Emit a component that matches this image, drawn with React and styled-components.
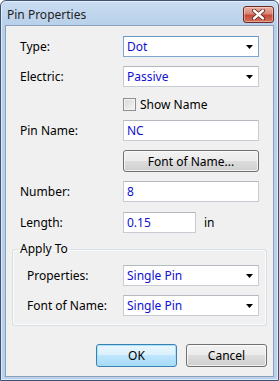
import styled, { createGlobalStyle } from 'styled-components';

const GlobalStyle = createGlobalStyle`
	html, body {
		margin: 0;
		padding: 0;
		background: #ffffff;
	}
	* {
		box-sizing: border-box;
	}
`;

const Window = styled.div`
	display: flex;
	flex-direction: column;
	width: 279px;
	height: 381px;
	padding: 0 4px 3px;
	border: 1px solid #3e5373;
	border-radius: 6px 6px 0 0;
	background: linear-gradient(#cadcf1, #b7cfea 26px, #b9d1ea);
	box-shadow: inset 0 0 0 1px rgba(255, 255, 255, 0.55);
	font-family: 'Noto Sans', 'Liberation Sans', sans-serif;
	font-size: 12px;
	color: #000;
`;

const TitleBar = styled.div`
	display: flex;
	align-items: center;
	justify-content: space-between;
	height: 24px;
	padding: 0 0 0 2px;
`;

const Title = styled.span`
	font-size: 12px;
	color: #1e1e1e;
	margin-top: 2px;
`;

const CloseButton = styled.button`
	display: flex;
	align-items: center;
	justify-content: center;
	width: 31px;
	height: 17px;
	margin: 3px 0 0;
	padding: 0;
	border: 1px solid #6f2a22;
	border-radius: 3px;
	background: linear-gradient(#eab0a4, #d98474 45%, #c54a38 55%, #d4735f);
	box-shadow: inset 0 0 0 1px rgba(255, 255, 255, 0.35);
`;

const Client = styled.div`
	flex: 1;
	display: flex;
	flex-direction: column;
	padding: 0 6px;
	background: #f0f0f0;
	border: 1px solid #8aa0bd;
`;

const Row = styled.div`
	display: grid;
	grid-template-columns: ${(p) => p.$label || 103}px 136px;
	align-items: center;
	margin-top: ${(p) => p.$mt || 0}px;
	padding-left: ${(p) => p.$indent || 8}px;
`;

const Label = styled.span`
	line-height: 16px;
`;

const Control = styled.div`
	display: flex;
	align-items: center;
`;

const Field = styled.div`
	display: flex;
	align-items: center;
	justify-content: space-between;
	width: ${(p) => p.$w || 136}px;
	height: 21px;
	padding: 0 5px 0 3px;
	background: #ffffff;
	border: 1px solid ${(p) => (p.$focus ? '#7ea6d2' : '#c7ccd3')};
	border-top-color: ${(p) => (p.$focus ? '#6b95c6' : '#b4b9c0')};
	color: #1010d0;
	line-height: 16px;
`;

const Arrow = () => (
	<svg width="7" height="4" viewBox="0 0 7 4">
		<polygon points="0,0 7,0 3.5,4" fill="#000" />
	</svg>
);

const CheckWrap = styled.label`
	display: flex;
	align-items: center;
	gap: 4px;
	height: 13px;
`;

const CheckBox = styled.span`
	width: 13px;
	height: 13px;
	border: 1px solid #8e8f8f;
	background: linear-gradient(135deg, #d8d8d8, #f5f5f5);
	box-shadow: inset 0 0 0 1px #f4f4f4;
`;

const Button = styled.button`
	width: ${(p) => p.$w || 81}px;
	height: ${(p) => p.$h || 23}px;
	padding: 0;
	font-family: inherit;
	font-size: 12px;
	color: #000;
	border: 1px solid ${(p) => (p.$default ? '#3c7fb1' : '#707070')};
	border-radius: 3px;
	background: ${(p) =>
		p.$default
			? 'linear-gradient(#eaf6fd, #d9f0fc 50%, #bee6fd 50%, #a7d9f5)'
			: 'linear-gradient(#f2f2f2, #ebebeb 50%, #dddddd 50%, #cfcfcf)'};
	box-shadow: inset 0 0 0 1px
		${(p) => (p.$default ? 'rgba(160, 225, 252, 0.9)' : 'rgba(255, 255, 255, 0.7)')};
`;

const Unit = styled.span`
	margin-left: 8px;
`;

const Group = styled.fieldset`
	margin: 9px 0 0;
	padding: 0 0 9px;
	border: 1px solid #d5dfe5;
	border-radius: 3px;
	box-shadow: inset 0 0 0 1px #fbfbfb;
`;

const Legend = styled.legend`
	margin-left: 5px;
	padding: 0 2px;
	line-height: 14px;
`;

const Footer = styled.div`
	display: flex;
	justify-content: flex-end;
	gap: 9px;
	margin-top: 18px;
`;

function Combo({ value, focus }) {
	return (
		<Field $focus={focus}>
			<span>{value}</span>
			<Arrow />
		</Field>
	);
}

function PinProperties() {
	return (
		<Window>
			<TitleBar>
				<Title>Pin Properties</Title>
				<CloseButton>
					<svg width="13" height="11" viewBox="0 0 13 11">
						<path
							d="M2 1.5 L11 9.5 M11 1.5 L2 9.5"
							stroke="#5a1b14"
							strokeWidth="4"
							strokeLinecap="round"
						/>
						<path
							d="M2 1.5 L11 9.5 M11 1.5 L2 9.5"
							stroke="#ffffff"
							strokeWidth="2.4"
							strokeLinecap="round"
						/>
					</svg>
				</CloseButton>
			</TitleBar>
			<Client>
				<Row $mt={10}>
					<Label>Type:</Label>
					<Combo value="Dot" focus />
				</Row>
				<Row $mt={9}>
					<Label>Electric:</Label>
					<Combo value="Passive" />
				</Row>
				<Row $mt={11}>
					<span />
					<CheckWrap>
						<CheckBox />
						Show Name
					</CheckWrap>
				</Row>
				<Row $mt={9}>
					<Label>Pin Name:</Label>
					<Field>NC</Field>
				</Row>
				<Row $mt={9}>
					<span />
					<Button $w={136} $h={22}>
						Font of Name...
					</Button>
				</Row>
				<Row $mt={9}>
					<Label>Number:</Label>
					<Field>8</Field>
				</Row>
				<Row $mt={10}>
					<Label>Length:</Label>
					<Control>
						<Field $w={73}>0.15</Field>
						<Unit>in</Unit>
					</Control>
				</Row>
				<Group>
					<Legend>Apply To</Legend>
					<Row $mt={9} $indent={14} $label={96}>
						<Label>Properties:</Label>
						<Combo value="Single Pin" />
					</Row>
					<Row $mt={9} $indent={14} $label={96}>
						<Label>Font of Name:</Label>
						<Combo value="Single Pin" />
					</Row>
				</Group>
				<Footer>
					<Button $default>OK</Button>
					<Button>Cancel</Button>
				</Footer>
			</Client>
		</Window>
	);
}

export default function App() {
	return (
		<>
			<GlobalStyle />
			<PinProperties />
		</>
	);
}
